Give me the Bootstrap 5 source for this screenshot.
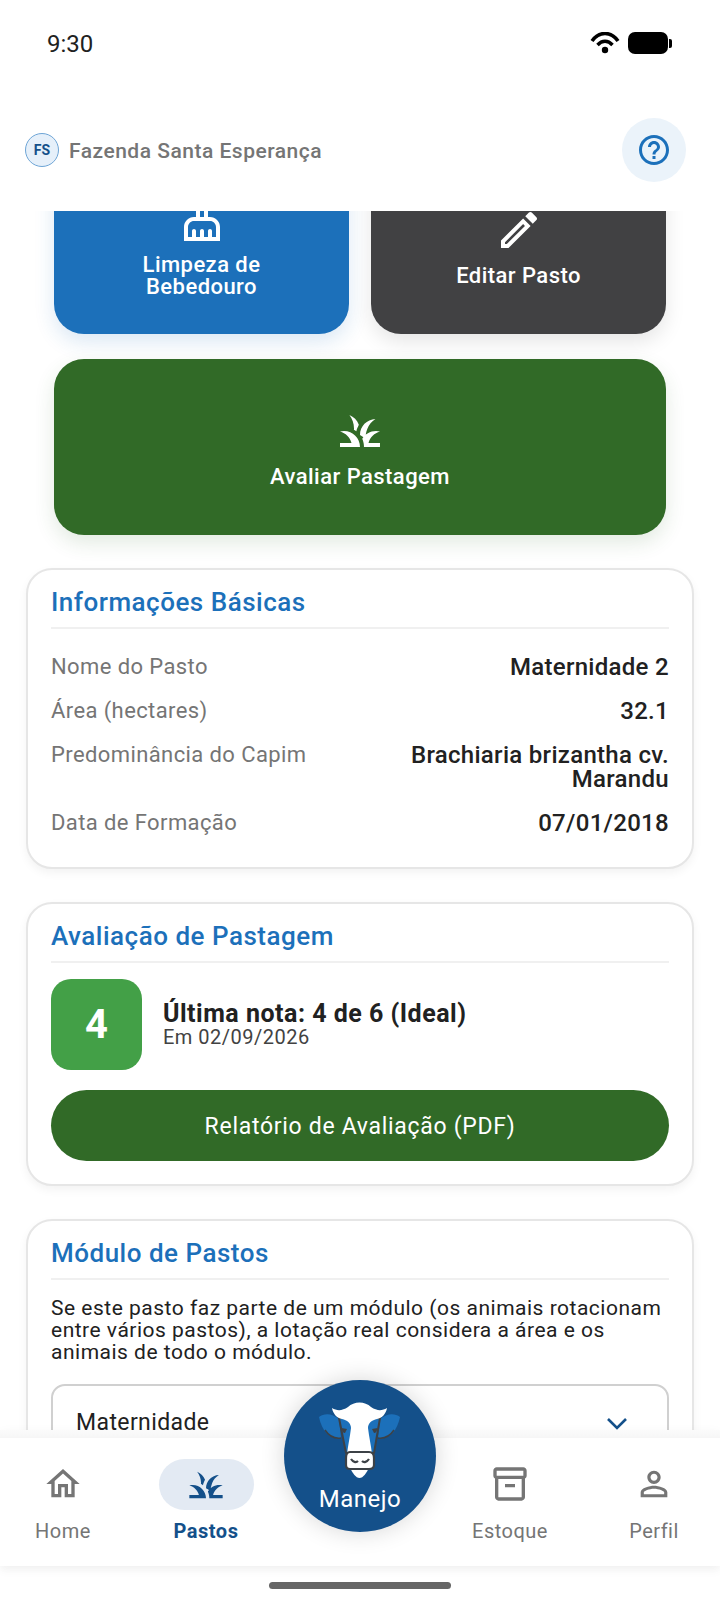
<!DOCTYPE html>
<html lang="pt-BR">
<head>
<meta charset="utf-8">
<title>Pasto</title>
<link href="https://cdn.jsdelivr.net/npm/bootstrap@5.3.0/dist/css/bootstrap.min.css" rel="stylesheet">
<style>
html,body{margin:0;background:#fff}
body{font-family:Roboto,"Liberation Sans",sans-serif;color:#212121;width:720px;height:1606px;overflow:hidden;letter-spacing:.5px}
.app-shell{width:720px;height:1606px;position:relative;background:#fff}
.status-bar{height:118px;padding:32px 48px 0 47px;align-items:flex-start}
.status-time{font-size:24px;line-height:24px;letter-spacing:0}
.battery-body{width:40px;height:22px;border-radius:7px;background:#000}
.battery-nub{width:3px;height:9px;background:#000;border-radius:0 2px 2px 0;margin-left:1px}
.top-header{height:93px;padding:0 34px 29px 25px;align-items:center}
.farm-mark{width:34px;height:34px;border-radius:50%;border:1.5px solid #6ea5d6;background:#e6f0fa;color:#14508a;font-size:14px;font-weight:700;letter-spacing:0;margin-right:10px}
.farm-name{font-size:21px;font-weight:500;color:#757575;letter-spacing:.5px;margin-top:4px}
.help-btn{width:64px;height:64px;border-radius:50%;background:#ebf3fa;border:0;padding:0}
.scroll-area{height:1227px;overflow:hidden}
.scroll-inner{margin-top:-53px;padding:0 26px}
.action-wrap{padding:0 28px;display:grid;grid-template-columns:295px 295px;gap:25px 22px}
.action-tile{height:176px;border-radius:30px;border:0;color:#fff;font-size:22px;font-weight:500;line-height:22px;letter-spacing:.45px;gap:11px;padding:0 20px}
.tile-blue{background:#1c70ba;box-shadow:0 8px 20px rgba(28,112,186,.16)}
.tile-dark{background:#414143;box-shadow:0 8px 20px rgba(0,0,0,.1)}
.tile-green{background:#316a27;grid-column:1 / 3;box-shadow:0 8px 20px rgba(49,106,39,.14)}
.tile-icon{width:48px;height:48px;fill:#fff;flex:none}
.info-panel{border:2px solid #e6e6e6;border-radius:26px;padding:15px 23px 0;background:#fff;box-shadow:0 4px 10px rgba(0,0,0,.05);margin-top:33px}
.panel-title{font-size:26px;line-height:34px;font-weight:500;color:#1c70ba;margin:0;padding-bottom:8px;border-bottom:2px solid #f0f0f0;letter-spacing:.5px}
.info-rows{padding:26px 0 32px;gap:20px}
.info-label{font-size:22px;line-height:23px;color:#757575;letter-spacing:.4px}
.info-value{font-size:24px;line-height:24px;font-weight:500;color:#212121;text-align:right;letter-spacing:.3px}
.value-wide{width:280px}
.grade-row{padding-top:16px;gap:21px;align-items:center}
.grade-box{width:91px;height:91px;border-radius:20px;background:#43a047;color:#fff;font-size:40px;font-weight:700;letter-spacing:0}
.grade-title{font-size:25px;line-height:24px;font-weight:700;letter-spacing:.5px}
.grade-date{font-size:20px;line-height:22px;color:#424242;letter-spacing:.5px}
.pdf-btn{display:block;width:100%;height:71px;border-radius:36px;background:#316a27;color:#fff;border:0;font-size:23px;letter-spacing:.7px;margin:20px 0 23px;padding:3px 0 0}
.panel-note{font-size:21px;line-height:22px;color:#212121;margin:17px 0 21px;font-weight:400;letter-spacing:.5px}
.select-box{height:120px;border:2.5px solid #d0d0d0;border-radius:14px;padding:25px 23px;font-size:23px;line-height:24px;color:#212121;letter-spacing:.4px;align-items:flex-start}
.chev-icon{margin-right:15px;flex:none}
.bottom-bar{height:128px;background:#fff;position:relative;box-shadow:0 -3px 12px rgba(0,0,0,.07),0 6px 8px rgba(0,0,0,.03);padding:0}
.bottom-bar::before{content:"";position:absolute;left:0;right:0;top:-8px;height:8px;background:linear-gradient(#fbfbfb,#f6f6f6)}
.tab-item{position:absolute;top:20px;width:110px;color:#757575;font-size:20px;line-height:24px;letter-spacing:.5px;font-weight:400}
.tab-icon{width:40px;height:40px;fill:#757575;display:block}
.tab-pill{width:95px;height:51px;border-radius:26px;background:#e3eaf3;margin-top:1px;margin-bottom:9px}
.tab-slot{height:51px;margin-bottom:10px}
.tab-active{color:#14508a;font-weight:700}
.tab-active .tab-icon{fill:#14508a}
.pos-home{left:8px}.pos-pastos{left:151px}.pos-estoque{left:455px}.pos-perfil{left:599px}
.manejo-fab{position:absolute;left:284px;top:-58px;width:152px;height:152px;border-radius:50%;background:#14508a;color:#fff;box-shadow:0 0 24px rgba(0,0,0,.16);font-size:24px;line-height:28px;letter-spacing:.5px;padding-top:21px}
.cow-art{width:82px;height:78px;display:block;margin-bottom:6px;flex:none}
.home-line{position:absolute;left:269px;top:1582px;width:182px;height:7px;border-radius:4px;background:#666}
</style>
</head>
<body>
<div class="app-shell d-flex flex-column">
  <div class="status-bar d-flex justify-content-between">
    <span class="status-time">9:30</span>
    <div class="d-flex align-items-center gap-2">
      <svg width="30" height="22" viewBox="0 0 30 22"><path d="M2 9C9-1 21-1 28 9" fill="none" stroke="#000" stroke-width="3.6"/><path d="M7.5 13c4.500-5 10.500-5 15 0" fill="none" stroke="#000" stroke-width="3.4"/><circle cx="15" cy="18" r="3.200"/></svg>
      <div class="d-flex align-items-center"><div class="battery-body"></div><div class="battery-nub"></div></div>
    </div>
  </div>
  <header class="top-header d-flex justify-content-between">
    <div class="d-flex align-items-center">
      <div class="farm-mark d-flex align-items-center justify-content-center">FS</div>
      <span class="farm-name">Fazenda Santa Esperança</span>
    </div>
    <button class="help-btn d-flex align-items-center justify-content-center" aria-label="Ajuda">
      <svg width="36" height="36" viewBox="0 0 24 24" fill="#1c70ba"><path d="M11 18h2v-2h-2v2zm1-16C6.480 2 2 6.480 2 12s4.480 10 10 10 10-4.480 10-10S17.520 2 12 2zm0 18c-4.410 0-8-3.590-8-8s3.590-8 8-8 8 3.590 8 8-3.590 8-8 8zm0-14c-2.210 0-4 1.790-4 4h2c0-1.100.9-2 2-2s2 .9 2 2c0 2-3 1.750-3 5h2c0-2.250 3-2.500 3-5 0-2.210-1.790-4-4-4z"/></svg>
    </button>
  </header>
  <main class="scroll-area">
    <div class="scroll-inner">
      <div class="action-wrap">
        <button class="action-tile tile-blue d-flex flex-column align-items-center justify-content-center">
          <svg class="tile-icon" viewBox="0 0 24 24"><path d="M16 11h-1V3c0-1.100-.9-2-2-2h-2c-1.100 0-2 .9-2 2v8H8c-2.760 0-5 2.240-5 5v7h18v-7c0-2.760-2.240-5-5-5zm-5-8h2v8h-2V3zm8 18h-2v-3c0-.55-.45-1-1-1s-1 .45-1 1v3h-2v-3c0-.55-.45-1-1-1s-1 .45-1 1v3H9v-3c0-.55-.45-1-1-1s-1 .45-1 1v3H5v-5c0-1.650 1.350-3 3-3h8c1.650 0 3 1.350 3 3v5z"/></svg>
          <span>Limpeza de<br>Bebedouro</span>
        </button>
        <button class="action-tile tile-dark d-flex flex-column align-items-center justify-content-center">
          <svg class="tile-icon" viewBox="0 0 24 24"><path d="M3 17.250V21h3.750L17.810 9.940l-3.750-3.750L3 17.250zM5.920 19H5v-.92l9.060-9.060.92.92L5.920 19zM20.710 5.630l-2.340-2.340c-.2-.2-.45-.29-.71-.29s-.51.1-.7.29l-1.830 1.830 3.750 3.750 1.830-1.830c.39-.39.39-1.020 0-1.410z"/></svg>
          <span>Editar Pasto</span>
        </button>
        <button class="action-tile tile-green d-flex flex-column align-items-center justify-content-center">
          <svg class="tile-icon" viewBox="0 0 24 24"><path d="M12 20H2v-2h5.750C7.020 15.190 4.810 13 2 12.260 2.640 12.100 3.310 12 4 12c4.420 0 8 3.580 8 8zM22 12.260C21.360 12.100 20.690 12 20 12c-2.930 0-5.480 1.580-6.880 3.930.29.66.53 1.350.67 2.070.13.65.2 1.320.2 2h8v-2h-5.740c.73-2.810 2.940-5 5.750-5.740zM15.640 11.020c.78-2.090 2.230-3.840 4.090-5C15.440 6.160 12 9.670 12 14v.02c.95.48 1.830 1.100 2.600 1.830.14-1.660.46-3.290 1.040-4.830zM11.420 8.850C10.580 6.660 8.880 4.890 6.700 4 8.140 5.860 9 8.180 9 10.710c0 .21-.03.41-.04.61.43.24.83.52 1.220.82.21-1.180.730-2.160 1.240-3.290z"/></svg>
          <span>Avaliar Pastagem</span>
        </button>
      </div>

      <section class="info-panel">
        <h2 class="panel-title">Informações Básicas</h2>
        <div class="info-rows d-flex flex-column">
          <div class="d-flex justify-content-between"><span class="info-label">Nome do Pasto</span><span class="info-value">Maternidade 2</span></div>
          <div class="d-flex justify-content-between"><span class="info-label">Área (hectares)</span><span class="info-value">32.1</span></div>
          <div class="d-flex justify-content-between"><span class="info-label">Predominância do Capim</span><span class="info-value value-wide">Brachiaria brizantha cv. Marandu</span></div>
          <div class="d-flex justify-content-between"><span class="info-label">Data de Formação</span><span class="info-value">07/01/2018</span></div>
        </div>
      </section>

      <section class="info-panel">
        <h2 class="panel-title">Avaliação de Pastagem</h2>
        <div class="grade-row d-flex">
          <div class="grade-box d-flex align-items-center justify-content-center">4</div>
          <div>
            <div class="grade-title">Última nota: 4 de 6 (Ideal)</div>
            <div class="grade-date">Em 02/09/2026</div>
          </div>
        </div>
        <button class="pdf-btn">Relatório de Avaliação (PDF)</button>
      </section>

      <section class="info-panel">
        <h2 class="panel-title">Módulo de Pastos</h2>
        <p class="panel-note">Se este pasto faz parte de um módulo (os animais rotacionam entre vários pastos), a lotação real considera a área e os animais de todo o módulo.</p>
        <div class="select-box d-flex justify-content-between">
          <span>Maternidade</span>
          <svg class="chev-icon" width="24" height="24" viewBox="0 0 24 24" fill="none" stroke="#14508a" stroke-width="2.600"><path d="M3 8l9 9 9-9"/></svg>
        </div>
      </section>
    </div>
  </main>
  <nav class="bottom-bar">
    <a class="tab-item pos-home d-flex flex-column align-items-center text-decoration-none">
      <span class="tab-slot d-flex align-items-center justify-content-center"><svg class="tab-icon" viewBox="0 0 24 24"><path d="M12 5.690l5 4.500V18h-2v-6H9v6H7v-7.810l5-4.500M12 3L2 12h3v8h6v-6h2v6h6v-8h3L12 3z"/></svg></span>
      <span>Home</span>
    </a>
    <a class="tab-item tab-active pos-pastos d-flex flex-column align-items-center text-decoration-none">
      <span class="tab-pill d-flex align-items-center justify-content-center"><svg class="tab-icon" viewBox="0 0 24 24"><path d="M12 20H2v-2h5.750C7.020 15.190 4.810 13 2 12.260 2.640 12.100 3.310 12 4 12c4.420 0 8 3.580 8 8zM22 12.260C21.360 12.100 20.690 12 20 12c-2.930 0-5.480 1.580-6.880 3.930.29.66.53 1.350.67 2.070.13.65.2 1.320.2 2h8v-2h-5.740c.73-2.810 2.940-5 5.750-5.740zM15.640 11.020c.78-2.090 2.230-3.840 4.090-5C15.440 6.160 12 9.670 12 14v.02c.95.48 1.830 1.100 2.600 1.830.14-1.660.46-3.290 1.040-4.830zM11.420 8.850C10.580 6.660 8.880 4.890 6.700 4 8.140 5.860 9 8.180 9 10.710c0 .21-.03.41-.04.61.43.24.83.52 1.220.82.21-1.180.730-2.160 1.240-3.290z"/></svg></span>
      <span>Pastos</span>
    </a>
    <a class="manejo-fab d-flex flex-column align-items-center text-decoration-none">
      <svg class="cow-art" viewBox="0 0 82 78">
        <path d="M0 16C5 12 13 12 20 18L22 37C12 39 3 31 0 16z" fill="#1c70ba"/>
        <path d="M81 16C76 12 68 12 61 18L59 37C69 39 78 31 81 16z" fill="#1c70ba"/>
        <path d="M6 29C10 35 15 38 22 37M75 29C71 35 66 38 59 37" fill="none" stroke="#3c4146" stroke-width="1.500"/>
        <path d="M20 17H61L55 52H27z" fill="#1c70ba" stroke="#3c4146" stroke-width="2" stroke-linejoin="round"/>
        <path d="M13 7C18 10 23 10 29 6 35 0 46 0 52 6 58 10 63 10 68 7 67 13 63 17 58 18 53 19 49 22 49 27 50 36 52 44 53 53H28C29 44 31 36 32 27 32 22 28 19 23 18 18 17 14 13 13 7z" fill="#fff"/>
        <path d="M22.500 27L28 28 26 32C24 32 23 30 22.500 27zM58.500 27L53 28 55 32C57 32 58 30 58.500 27z" fill="#3c4146"/>
        <path d="M31 66H50C48 72 44 77 40.500 77 37 77 33 72 31 66z" fill="#fff"/>
        <path d="M31 51H50C54 51 55 54 55 57V64C55 67 53 68 50 68H31C28 68 27 67 27 64V57C27 54 28 51 31 51z" fill="#fff" stroke="#3c4146" stroke-width="2.200"/>
        <path d="M32 58C34 61 37 62 39 60M50 58C48 61 45 62 43 60" fill="none" stroke="#3c4146" stroke-width="2.200"/>
      </svg>
      <span>Manejo</span>
    </a>
    <a class="tab-item pos-estoque d-flex flex-column align-items-center text-decoration-none">
      <span class="tab-slot d-flex align-items-center justify-content-center"><svg class="tab-icon" viewBox="0 0 24 24"><path d="M20 2H4c-1 0-2 1-2 2v3.010c0 .72.43 1.340 1 1.690V20c0 1.100 1.100 2 2 2h14c.9 0 2-.9 2-2V8.700c.57-.35 1-.97 1-1.690V4c0-1-1-2-2-2zm-1 18H5V9h14v11zm1-13H4V4h16v3zM9 12h6v2H9z"/></svg></span>
      <span>Estoque</span>
    </a>
    <a class="tab-item pos-perfil d-flex flex-column align-items-center text-decoration-none">
      <span class="tab-slot d-flex align-items-center justify-content-center"><svg class="tab-icon" viewBox="0 0 24 24"><path d="M12 5.900c1.160 0 2.100.94 2.100 2.100s-.94 2.100-2.100 2.100S9.900 9.160 9.900 8s.94-2.100 2.100-2.100m0 9c2.970 0 6.100 1.460 6.100 2.100v1.100H5.900V17c0-.64 3.130-2.100 6.100-2.100M12 4C9.790 4 8 5.790 8 8s1.790 4 4 4 4-1.790 4-4-1.790-4-4-4zm0 9c-2.670 0-8 1.340-8 4v3h16v-3c0-2.660-5.330-4-8-4z"/></svg></span>
      <span>Perfil</span>
    </a>
  </nav>
  <div class="home-line"></div>
</div>
<script src="https://cdn.jsdelivr.net/npm/bootstrap@5.3.0/dist/js/bootstrap.bundle.min.js"></script>
</body>
</html>
